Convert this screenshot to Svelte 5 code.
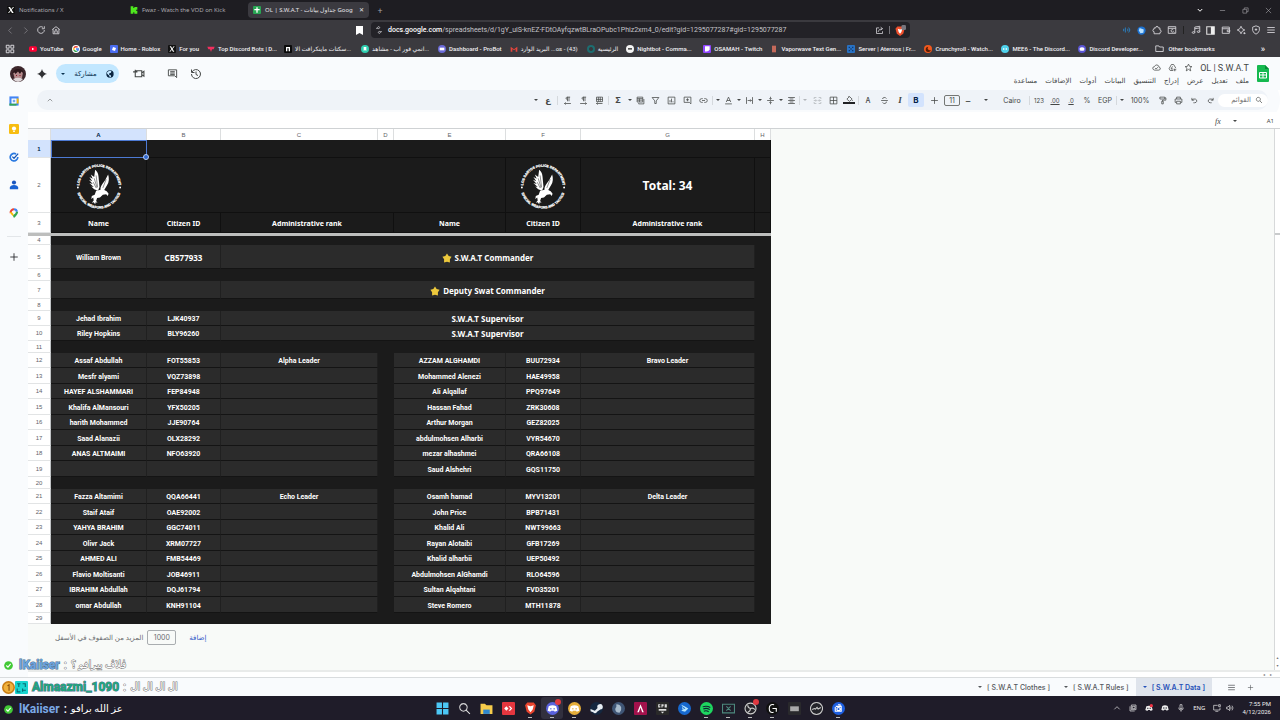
<script lang="ts">
	interface Cell {
		text?: string;
		span?: number;
		kind?: string;
	}

	interface Row {
		n: number;
		h: number;
		cells: Cell[];
	}

	const columns = [
		{ name: 'A', width: 96 },
		{ name: 'B', width: 74 },
		{ name: 'C', width: 157 },
		{ name: 'D', width: 16 },
		{ name: 'E', width: 112 },
		{ name: 'F', width: 75 },
		{ name: 'G', width: 174 },
		{ name: 'H', width: 16 },
	];

	const blank = (n: number, h: number): Row => ({ n, h, cells: [{ span: 8, kind: 'gap' }] });

	const band = (n: number, h: number, name: string, id: string, rank: string, kind = ''): Row => ({
		n,
		h,
		cells: [
			{ text: name },
			{ text: id, kind: n === 5 ? 'mid' : '' },
			{ text: rank, span: 5, kind: 'mid ' + kind },
			{ kind: 'gap' },
		],
	});

	function squad(start: number, members: string[][]): Row[] {
		return members.map((m, i) => ({
			n: start + i,
			h: i % 2 ? 16 : 15,
			cells: [
				{ text: m[0] },
				{ text: m[1] },
				{ text: m[4] },
				{ kind: 'gap' },
				{ text: m[2] },
				{ text: m[3] },
				{ text: m[5] },
				{ kind: 'gap' },
			],
		}));
	}

	const frozenRows: Row[] = [
		{ n: 1, h: 18, cells: [{ kind: 'head selected' }, { span: 7, kind: 'head' }] },
		{
			n: 2,
			h: 55,
			cells: [
				{ kind: 'head logo' },
				{ span: 4, kind: 'head' },
				{ kind: 'head logo' },
				{ text: 'Total: 34', kind: 'head total' },
				{ kind: 'head' },
			],
		},
		{
			n: 3,
			h: 20,
			cells: [
				{ text: 'Name', kind: 'head title' },
				{ text: 'Citizen ID', kind: 'head title' },
				{ text: 'Administrative rank', span: 2, kind: 'head title' },
				{ text: 'Name', kind: 'head title' },
				{ text: 'Citizen ID', kind: 'head title' },
				{ text: 'Administrative rank', kind: 'head title' },
				{ kind: 'head' },
			],
		},
	];

	const rows: Row[] = [
		blank(4, 9),
		band(5, 24, 'William Brown', 'CB577933', 'S.W.A.T Commander', 'star'),
		blank(6, 12),
		band(7, 18, '', '', 'Deputy Swat Commander', 'star'),
		blank(8, 12),
		band(9, 15, 'Jehad Ibrahim', 'LJK40937', 'S.W.A.T Supervisor'),
		band(10, 15, 'Riley Hopkins', 'BLY96260', 'S.W.A.T Supervisor'),
		blank(11, 12),
		...squad(12, [
			['Assaf Abdullah', 'FOT55853', 'AZZAM ALGHAMDI', 'BUU72934', 'Alpha Leader', 'Bravo Leader'],
			['Mesfr alyami', 'VQZ73898', 'Mohammed Alenezi', 'HAE49958'],
			['HAYEF ALSHAMMARI', 'FEP84948', 'Ali Alqallaf', 'PPQ97649'],
			['Khalifa AlMansouri', 'YFX50205', 'Hassan Fahad', 'ZRK30608'],
			['harith Mohammed', 'JJE90764', 'Arthur Morgan', 'GEZ82025'],
			['Saad Alanazii', 'OLX28292', 'abdulmohsen Alharbi', 'VYR54670'],
			['ANAS ALTMAIMI', 'NFO63920', 'mezar alhashmei', 'QRA66108'],
			['', '', 'Saud Alshehri', 'GQS11750'],
		]),
		blank(20, 12),
		...squad(21, [
			['Fazza Altamimi', 'QQA66441', 'Osamh hamad', 'MYV13201', 'Echo Leader', 'Delta Leader'],
			['Staif Ataif', 'OAE92002', 'John Price', 'BPB71431'],
			['YAHYA BRAHIM', 'GGC74011', 'Khalid Ali', 'NWT99663'],
			['Olivr Jack', 'XRM07727', 'Rayan Alotaibi', 'GFB17269'],
			['AHMED ALI', 'FMB54469', 'Khalid alharbii', 'UEP50492'],
			['Flavio Moltisanti', 'JOB46911', 'Abdulmohsen AlGhamdi', 'RLO64596'],
			['IBRAHIM Abdullah', 'DQJ61794', 'Sultan Alqahtani', 'FVD35201'],
			['omar Abdullah', 'KNH91104', 'Steve Romero', 'MTH11878'],
		]),
		blank(29, 11),
	];

	const bookmarks = [
		{ label: 'YouTube', color: '#f03', mark: 'M9 8l7 4-7 4z', flat: true },
		{ label: 'Google', google: true },
		{ label: 'Home - Roblox', color: '#4a6cf0', mark: 'M9 6l9 3-3 9-9-3z', square: true },
		{ label: 'For you', color: '#111', mark: 'M5 4h4l10 16h-4zM17 4h3L7 20H4z', square: true },
		{ label: 'Top Discord Bots | D...', color: 'none', mark: 'M1 5h22l-3 8h-5l-3 8-3-8H4z', ink: '#f0305f', wide: true },
		{ label: 'سكتات ماينكرافت الا...', color: '#0a0a0a', mark: 'M6 19V6h12v13h-4v-9h-4v9z', square: true, wide: true, arabic: true },
		{ label: 'انمي فور اب - مشاهد...', color: '#2fd0b0', mark: 'M8 6h8v12l-4-3-4 3z', wide: true, arabic: true },
		{ label: 'Dashboard - ProBot', color: '#6a6ad8', mark: 'M5 8h14v8H5z' },
		{ label: 'البريد الوارد ...os - (43)', color: 'none', mark: 'M2 20V5l10 8 10-8v15h-5v-8l-5 4-5-4v8z', ink: '#e8453c', wide: true, arabic: true },
		{ label: 'الرئيسية', color: '#1d6d70', mark: 'M12 6a6 6 0 1 0 .1 0z', ink: '#38373c', arabic: true },
		{ label: 'Nightbot - Comma...', color: '#f4f4f4', mark: 'M6 9h12v5H6z', ink: '#555', wide: true },
		{ label: 'OSAMAH - Twitch', color: '#9146ff', mark: 'M6 4h14v10l-5 5h-4l-3 3v-3H6z', square: true },
		{ label: 'Vaporwave Text Gen...', color: 'none', mark: 'M6 2h12v20H6z', ink: '#c4695a', wide: true },
		{ label: 'Server | Aternos | Fr...', color: '#2872c4', mark: 'M5 5h4v4H5zM15 5h4v4h-4zM10 10h4v4h-4zM5 15h4v4H5zM15 15h4v4h-4z', ink: '#123a70', square: true, wide: true },
		{ label: 'Crunchyroll - Watch...', color: '#f2591d', mark: 'M13 5a8 8 0 1 0 8 9 5 5 0 1 1-8-9z', ink: '#5b1c05', wide: true },
		{ label: 'MEE6 - The Discord...', color: '#4fd2ec', mark: 'M6 10h4v4H6zM14 10h4v4h-4z', wide: true },
		{ label: 'Discord Developer...', color: '#5b55d6', mark: 'M5 9q7-4 14 0v7q-7 3-14 0z', wide: true },
	];

	// strokes on a 24 unit grid
	const icons: Record<string, string> = {
		back: 'M15 4l-8 8 8 8',
		forward: 'M9 4l8 8-8 8',
		reload: 'M20 12a8 8 0 1 1-3-6.200M20 3v6h-6',
		home: 'M3 11l9-7 9 7M5 10v11h14V10M9 20v-6h6v6M10 11h4',
		tune: 'M3 7h6M13 7a3 3 0 1 0-4 0 3 3 0 0 0 4 0M21 17h-6M11 17a3 3 0 1 0 4 0 3 3 0 0 0-4 0',
		share: 'M11 5H4v15h16v-6M8 16q1-8 12-9M15 3l5 4-5 4',
		wave: 'M4 9v6M8 6v12M13 9q3 3 0 6M16 6q6 6 0 12',
		puzzle: 'M5 7h4q0-4 3-4t3 4h4v5q3 0 3 3t-3 3v3H5v-5q-3 0-3-3t3-3z',
		tabsearch: 'M3 4h18v16H3zM3 8h18M15 12a3 3 0 1 0 0 4M15 16l3 2',
		music: 'M9 18V5l12-2v13M9 9l12-2M9 18a3 2 0 1 1-6 0 3 2 0 0 1 6 0M21 16a3 2 0 1 1-6 0 3 2 0 0 1 6 0',
		wallet: 'M3 5h17v15H3zM3 9h18M21 12h-6v4h6z',
		leo: 'M12 3l3 6 6 3-6 3-3 6-3-6-6-3 6-3zM20 17v5M18 20h5',
		shield: 'M12 2l8 3v8q-1 6-8 9-7-3-8-9V5zM12 8v6M9 11h6',
		menu: 'M3 6h18M3 12h18M3 18h18',
		apps: 'M3 3h7v7H3zM14 3h7v7h-7zM3 14h7v7H3zM14 14h7v7h-7z',
		folder: 'M2 5h8l2 3h10v12H2z',
		video: 'M7 7h11v11H6v-6M18 11l4-3v9l-4-3M2 9h8M6 5v8',
		comment: 'M3 4h18v17l-4-4H3zM7 8h10M7 11h10M7 14h10',
		history: 'M4 8a9 9 0 1 1-1 4M3 3v6h6M12 7v6l4 2',
		cloud: 'M7 19q-5-1-5-5 0-4 5-5 2-4 6-4 5 1 6 6 4 1 3 5-1 3-4 3zM8 13l3 3 5-5',
		drive: 'M9 4h6l6 10M9 4L3 15l3 5h8M12 9l-4 7h6M18 15v7M15 18h7',
		star: 'M12 3l3 6 6 .6-5 4.400 2 7-6-4-6 4 2-7-5-4.400L9 9z',
		search: 'M10 4a6 6 0 1 0 .1 0M14.500 14.500L21 21',
		redo: 'M19 5v6h-6M19 11q-4-4-9-3-5 2-4 6 1 4 6 4h3',
		undo: 'M5 5v6h6M5 11q4-4 9-3 5 2 4 6-1 4-6 4H9',
		print: 'M7 8V3h10v5M6 17H3V8h18v9h-3M7 14h10v7H7z',
		paint: 'M5 3h13v5H5zM18 5h3v6h-9v3M10 14h4v7h-4z',
		fill: 'M5 11l7-7 7 7-7 6zM9 3l3 3M20 14v2',
		borders: 'M3 3h18v18H3zM3 12h18M12 3v18',
		merge: 'M3 8V4h6M15 4h6v4M3 16v4h6M15 20h6v-4M2 12h7M7 9l3 3-3 3M22 12h-7M17 9l-3 3 3 3',
		align: 'M3 4h18M7 8h10M3 12h18M7 16h10M3 20h18',
		valign: 'M3 12h18M12 2v7M9 6l3 3 3-3M12 22v-7M9 18l3-3 3 3',
		wrap: 'M4 3v18M20 3v18M7 12h10M14 9l3 3-3 3',
		link: 'M10 7H7a5 5 0 0 0 0 10h3M14 7h3a5 5 0 0 1 0 10h-3M8 12h8',
		addcomment: 'M3 3h18v18l-4-4H3zM12 6v8M8 10h8',
		chart: 'M3 3h18v18H3zM8 17v-6M12 17V7M16 17v-3',
		filter: 'M3 4h18l-7 9v7h-4v-7z',
		views: 'M3 3h15v13H3zM3 7h15M7 19v2h14V8M3 11h15M9 7v9',
		rtlsheet: 'M4 3h16v12H4zM9 3v12M14 3v12M4 9h16M4 20h16M7 17l-3 3 3 3',
		ltr: 'M11 3h8M12 3v11M16 3v11M12 9q-5 0-4-4 1-2 4-2M3 20h17M17 17l3 3-3 3',
		rtl: 'M11 3h8M12 3v11M16 3v11M12 9q-5 0-4-4 1-2 4-2M4 20h17M7 17l-3 3 3 3',
		textcolor: 'M6 16l6-13 6 13M8 12h8M3 21h18',
		strike: 'M3 12h18M17 7q-2-4-6-3-5 1-4 4M7 17q2 4 6 3 5-1 4-5',
		plus: 'M12 3v18M3 12h18',
	};

	const tools = [
		{ caret: true },
		{ text: 'ع', cls: 'bold' },
		{ sep: true },
		{ icon: 'rtl', label: 'Right to left' },
		{ icon: 'ltr', label: 'Left to right' },
		{ icon: 'rtlsheet', label: 'Sheet direction' },
		{ sep: true },
		{ text: 'Σ', cls: 'bold' },
		{ caret: true },
		{ icon: 'views', label: 'Filter views', cls: 'slim' },
		{ icon: 'filter', label: 'Filter' },
		{ icon: 'chart', label: 'Insert chart' },
		{ icon: 'addcomment', label: 'Insert comment' },
		{ icon: 'link', label: 'Insert link' },
		{ sep: true },
		{ caret: true },
		{ icon: 'textcolor', label: 'Text rotation', cls: 'slim' },
		{ caret: true },
		{ icon: 'wrap', label: 'Text wrapping', cls: 'slim' },
		{ caret: true },
		{ icon: 'valign', label: 'Vertical align', cls: 'slim' },
		{ caret: true },
		{ icon: 'align', label: 'Horizontal align', cls: 'slim' },
		{ sep: true },
		{ caret: true, cls: 'dim' },
		{ icon: 'merge', label: 'Merge cells', cls: 'dim' },
		{ icon: 'borders', label: 'Borders' },
		{ icon: 'fill', label: 'Fill colour', cls: 'filled' },
		{ sep: true },
		{ text: 'A', cls: 'letter' },
		{ icon: 'strike', label: 'Strikethrough' },
		{ text: 'I', cls: 'italic' },
		{ text: 'B', cls: 'active bold' },
		{ icon: 'plus', label: 'Increase font size', cls: 'broad' },
		{ size: true },
		{ text: '−', cls: 'big' },
		{ caret: true, cls: 'broad' },
		{ text: 'Cairo', cls: 'font' },
		{ sep: true },
		{ text: '123', cls: 'small' },
		{ text: '.00', cls: 'under' },
		{ text: '.0', cls: 'under' },
		{ text: '%' },
		{ text: 'EGP', cls: 'broad' },
		{ sep: true },
		{ caret: true },
		{ text: '100%', cls: 'zoom' },
		{ icon: 'paint', label: 'Paint format' },
		{ icon: 'print', label: 'Print' },
		{ icon: 'undo', label: 'Undo' },
		{ icon: 'redo', label: 'Redo' },
	];

	const menus = ['ملف', 'تعديل', 'عرض', 'إدراج', 'التنسيق', 'البيانات', 'أدوات', 'الإضافات', 'مساعدة'];

	const taskbar = [
		{ name: 'Start', bg: 'none', d: 'M1 1h10v10H1zM13 1h10v10H13zM1 13h10v10H1zM13 13h10v10H13z', ink: '#4cc7f5' },
		{ name: 'Search', bg: 'none', line: 'M10 3a7 7 0 1 0 .1 0M15 15l7 7', ink: '#ddd' },
		{ name: 'Explorer', bg: 'none', d: 'M1 3h8l3 3h11v16H1z', ink: '#f7cc4b', d2: 'M6 14h12v8H6z', ink2: '#2f87cf' },
		{ name: 'AnyDesk', bg: '#e5363f', d: 'M4 12l4-4 4 4-4 4zM12 8h3l4 4-4 4h-3l4-4z', ink: '#fff' },
		{ name: 'Brave', bg: 'none', d: 'M6 1h12l4 5-3 12-7 5-7-5L2 6z', ink: '#e8442e', d2: 'M6 6l6 2 6-2-2 8-4 5-4-5z', ink2: '#fff', open: true },
		{ name: 'Discord', bg: '#5a62de', round: true, d: 'M5 8q7-4 14 0l2 8-5 2-1-2H9l-1 2-5-2zM8 11v3h2v-3zM14 11v3h2v-3z', ink: '#fff', badge: true, active: true, open: true },
		{ name: 'Discord Canary', bg: '#e5ae3a', round: true, d: 'M5 8q7-4 14 0l2 8-5 2-1-2H9l-1 2-5-2zM8 11v3h2v-3zM14 11v3h2v-3z', ink: '#fff', open: true },
		{ name: 'Steam', bg: '#14273f', round: true, d: 'M1 13l8 3 5-5a5 5 0 1 1 5 3l-6 4a4 4 0 0 1-7 1l-5-2z', ink: '#e7edf2' },
		{ name: 'Eclipse', bg: '#3f5575', round: true, d: 'M8 4q7 0 9 6 1 6-3 10-7 0-8-6 0-4 2-5z', ink: '#a9bbcc' },
		{ name: 'A', bg: '#a3124c', d: 'M6 19l6-15 6 15h-3l-3-9-3 9z', ink: '#fff' },
		{ name: 'Epic Games', bg: '#292929', d: 'M4 4h4v2H6v2h2v2H4zM10 4h4v4h-2v2h-2zM16 4h4v6h-4zM5 13h14v3H5zM9 18h6l-3 3z', ink: '#ddd' },
		{ name: 'Battle.net', bg: '#1769cf', round: true, d: 'M6 5l6 3 7 4-6 6-7-2 5-3zM8 8v6l6-2z', ink: '#b5e6ff' },
		{ name: 'Spotify', bg: '#1ed760', round: true, line: 'M5 9q7-3 14 1M6 13q6-3 12 1M7 17q5-2 9 1', ink: '#123', open: true },
		{ name: 'Xbox Remote', bg: 'none', line: 'M1 4h22v16H1zM8 8l8 8M16 8l-8 8', ink: '#4d887d', open: true },
		{ name: 'OBS', bg: '#25242a', round: true, line: 'M12 2a10 10 0 1 0 .1 0M12 12q-5-1-5-6M12 12q5-2 8 2M12 12q0 5-5 7', ink: '#ccc', badge: true, open: true },
		{ name: 'G Hub', bg: '#111', round: true, line: 'M15 5q-9-2-9 7t8 7M12 12h7v6', ink: '#fff', open: true },
		{ name: 'Keyboard', bg: '#29292c', d: 'M4 8h16v9H4z', ink: '#aaa' },
		{ name: 'JMP', bg: '#24242a', round: true, line: 'M12 1a11 11 0 1 0 .1 0M4 14l4-2 2 1 3-3 2 3 5-3', ink: '#ccc' },
		{ name: 'Camera', bg: '#1d5fe0', round: true, line: 'M7 8h10v9H6V9M11 5h4v3M12 10a3 3 0 1 0 .1 0', ink: '#fff', open: true },
	];

	const chat = [
		{ name: 'lKaiiser', text: 'ڤلاڤ بيرافو ؟', color: '#6ba3e0', badges: ['check'], pale: true },
		{ name: 'Almaazmi_1090', text: 'ال ال ال ال', color: '#1fa77c', badges: ['coin', 'tiles'], pale: true },
		{ name: 'lKaiiser', text: 'عز الله برافو', color: '#7ba9e6', badges: ['check'], pale: false },
	];

	const browserTools = ['wave', 'dot', 'puzzle', 'tabsearch', '|', 'music', 'panel', 'wallet', 'leo', 'shield', 'menu'];
	const sheetTabs = ['[ S.W.A.T Clothes ]', '[ S.W.A.T Rules ]', '[ S.W.A.T Data ]'];

	let rowCount = 1000;
	let fontSize = 11;
</script>

{#snippet icon(name, size = 10)}
	<svg class="icon" width={size} height={size} viewBox="0 0 24 24" aria-hidden="true"><path d={icons[name]} /></svg>
{/snippet}

{#snippet seal(id)}
	<svg class="seal" viewBox="0 0 100 100" aria-label="Los Santos Police Department">
		<defs>
			<path id="{id}-top" d="M9 51a41 41 0 0 1 82 0" />
			<path id="{id}-bottom" d="M3 50a47 47 0 0 0 94 0" />
		</defs>
		<text><textPath href="#{id}-top" startOffset="50%">LOS SANTOS POLICE DEPARTMENT</textPath></text>
		<text><textPath href="#{id}-bottom" startOffset="50%">SPECIAL WEAPONS AND TACTICS</textPath></text>
		<circle cx="6" cy="53" r="2" />
		<circle cx="94" cy="53" r="2" />
		<path d="M42 16q6 4 7 14l2 22-3 8-8-3-6-6 5 1-9-8 7 2-8-9 7 3-6-9 7 4-4-9 7 5z" />
		<path d="M69 26q4 12-2 22l-7 12-6 2q-3-8 3-16 7-9 12-20z" />
		<path d="M44 60l10-2q8 0 12 3l4 5-2 5-3-4-7 1-6 6-6 1-2 6 3 4-4-1-1 4-3-4-4 1 4-5-1-6-4 3 1-6 6-3z" />
		<path d="M44 28l3 24M40 34l6 20M38 42l6 12M65 36l-7 18" stroke="#1b1b1b" stroke-width="1" />
	</svg>
{/snippet}

{#snippet sheetRow(row)}
	<tr style="height: {row.h}px">
		<th class="rownum" class:current={row.n === 1} scope="row"><span>{row.n}</span></th>
		{#each row.cells as cell, i}
			<td colspan={cell.span ?? 1} class={cell.kind ?? ''}>
				{#if cell.kind?.includes('logo')}
					{@render seal('seal' + i)}
				{:else if cell.kind?.includes('selected')}
					<span class="handle"></span>
				{:else if cell.text}
					<div class="value">
						{#if cell.kind?.includes('star')}
							<svg class="gold" viewBox="0 0 24 24"><path d="M12 1l4 6 7 2-4 6 0 8-7-2-7 2 0-8-4-6 7-2z" /></svg>
						{/if}{cell.text}
					</div>
				{/if}
			</td>
		{/each}
	</tr>
{/snippet}

<div class="screen">
	<nav class="tabs" aria-label="Browser tabs">
		<a class="tab" href="#x"><svg class="fav" viewBox="0 0 24 24"><rect width="24" height="24" rx="3" fill="#111" /><path d="M4 3h5l11 18h-5zM18 3h3L6 21H3z" fill="#fff" /></svg>Notifications / X</a>
		<a class="tab" href="#kick"><svg class="fav" viewBox="0 0 24 24"><path d="M2 1h8v5h3V3h9v8h-4v3h4v9h-9v-4h-3v4H2z" fill="#4fe81e" /></svg>Fwaz - Watch the VOD on Kick</a>
		<a class="tab open" href="#sheet"><svg class="fav" viewBox="0 0 24 24"><rect width="24" height="24" rx="3" fill="#28a653" /><path d="M4 9h16v4H4zM10 4h4v16h-4z" fill="#fff" /></svg><span class="tab-title">OL | S.W.A.T - جداول بيانات Goog</span><span class="x">✕</span></a>
		<button class="new-tab" aria-label="New tab">+</button>
		<div class="window-buttons">
			<button aria-label="Tabs"><svg class="icon bright" width="6" height="6" viewBox="0 0 24 24"><path d="M3 8l9 9 9-9" /></svg></button>
			<button aria-label="Minimise"><svg class="icon" width="7" height="7" viewBox="0 0 24 24"><path d="M3 12h18" /></svg></button>
			<button aria-label="Restore"><svg class="icon" width="7" height="7" viewBox="0 0 24 24"><path d="M3 8h13v13H3zM8 8V3h13v13h-5" /></svg></button>
			<button aria-label="Close"><svg class="icon" width="7" height="7" viewBox="0 0 24 24"><path d="M3 3l18 18M21 3L3 21" /></svg></button>
		</div>
	</nav>

	<div class="address">
		<div class="nav-buttons">
			<button class="faded" aria-label="Back">{@render icon('back', 9)}</button>
			<button class="faded" aria-label="Forward">{@render icon('forward', 9)}</button>
			<button aria-label="Reload">{@render icon('reload', 10)}</button>
			<button aria-label="Home">{@render icon('home', 10)}</button>
		</div>
		<button class="bookmark" aria-label="Bookmark"><svg width="7" height="9" viewBox="0 0 14 18"><path d="M0 0h14v18l-7-4-7 4z" fill="#fff" /></svg></button>
		<div class="url">
			{@render icon('tune', 8)}
			<span class="link"><b>docs.google.com</b>/spreadsheets/d/1gY_uiS-knEZ-FDtOAyfqzwtBLraOPubc1Phiz2xm4_0/edit?gid=1295077287#gid=1295077287</span>
			{@render icon('share', 9)}
			<i></i>
			<svg width="11" height="11" viewBox="0 0 24 24"><path d="M5 3h12l4 5-3 11-7 5-7-5L1 8z" fill="#ed4f2c" /><path d="M6 8l5 2 5-2-2 7-3 4-3-4z" fill="#fff" /><rect x="14" y="0" width="10" height="11" rx="3" fill="#77767e" /></svg>
		</div>
		<div class="extensions">
			{#each browserTools as tool}
				{#if tool === '|'}
					<i class="bar"></i>
				{:else if tool === 'dot'}
					<button aria-label="Extension"><svg width="9" height="9" viewBox="0 0 24 24"><circle cx="12" cy="12" r="11" fill="#1d73d3" /><path d="M7 5l11 4-1 9-8 1-4-7z" fill="#b9e1ff" /></svg></button>
				{:else if tool === 'panel'}
					<button aria-label="Side panel"><svg width="9" height="9" viewBox="0 0 24 24"><path d="M2 2h20v20H2z" fill="none" stroke="#ddd" stroke-width="3" /><path d="M13 2h9v20h-9z" fill="#eee" /></svg></button>
				{:else}
					<button class:blue={tool === 'wave'} aria-label={tool}>{@render icon(tool, 10)}</button>
				{/if}
			{/each}
		</div>
	</div>

	<nav class="bookmarks" aria-label="Bookmarks">
		<button class="apps" aria-label="Apps">{@render icon('apps', 10)}</button>
		{#each bookmarks as b}
			<a href="#bookmark" class:wide={b.wide} class:arabic={b.arabic}>
				<svg class="fav" viewBox="0 0 24 24">
					{#if b.google}
						<circle cx="12" cy="12" r="12" fill="#fff" />
						<g fill="none" stroke-width="4"><path d="M17 7a7 7 0 0 0-11 2" stroke="#ea4335" /><path d="M6 9a7 7 0 0 0 0 6" stroke="#fbbc04" /><path d="M6 15a7 7 0 0 0 10 3" stroke="#34a853" /><path d="M12 12h7q0 4-3 6" stroke="#4285f4" /></g>
					{:else}
						<rect y={b.flat ? 4 : 0} width="24" height={b.flat ? 16 : 24} rx={b.flat ? 5 : b.square ? 3 : 12} fill={b.color} />
						<path d={b.mark} fill={b.ink ?? '#fff'} />
					{/if}
				</svg>{b.label}
			</a>
		{/each}
		<a class="other" href="#other">{@render icon('folder', 9)}Other bookmarks</a>
		<button class="more" aria-label="More bookmarks">»</button>
	</nav>

	<header class="doc">
		<svg class="avatar" viewBox="0 0 32 32"><circle cx="16" cy="16" r="16" fill="#3d272c" /><path d="M6 12q9-8 20 0l-2 12q-8 6-15 0z" fill="#b58b8d" /><path d="M4 15q4-10 13-9 9 0 11 10l-5-5-3 5-4-5-5 5-2-3z" fill="#2b171b" /><path d="M12 18h2v2h-2zM19 18h2v2h-2z" fill="#8b1522" /><path d="M6 26q10-5 20 0-4 6-10 6t-10-6z" fill="#ded6d8" /></svg>
		<svg class="spark" viewBox="0 0 24 24"><path d="M12 0q2 10 12 12-10 2-12 12Q10 14 0 12 10 10 12 0z" /></svg>
		<button class="share"><i class="caret"></i><span>مشاركة</span><svg width="8" height="8" viewBox="0 0 24 24"><circle cx="12" cy="12" r="11" fill="#0a2540" /><path d="M10 2l6 1-1 5-5 2-1 4 5 1 1 6-4 1-1-5-5-4-3-4q2-5 8-7z" fill="#c2e7ff" /></svg></button>
		<button class="act video" aria-label="Meet">{@render icon('video', 13)}</button>
		<button class="act" aria-label="Comments">{@render icon('comment', 11)}</button>
		<button class="act" aria-label="History">{@render icon('history', 12)}</button>
		<div class="doc-name" dir="rtl">
			<div class="title-line">
				<h1 dir="ltr">OL | S.W.A.T</h1>
				{@render icon('star', 9)}
				{@render icon('drive', 9)}
				{@render icon('cloud', 9)}
			</div>
			<div class="menus">
				{#each menus as menu}<button>{menu}</button>{/each}
			</div>
		</div>
		<svg class="sheets-logo" viewBox="0 0 24 34"><path d="M2 0h14l8 8v24q0 2-2 2H2q-2 0-2-2V2q0-2 2-2z" fill="#16b94f" /><path d="M16 0l8 8h-8z" fill="#078b36" /><path d="M5 15h14v11H5zM5 20h14M12 15v11" fill="none" stroke="#fff" stroke-width="2" /></svg>
	</header>

	<div class="workspace">
		<aside class="rail">
			<svg viewBox="0 0 24 24"><path d="M1 1h22v22H1z" fill="#4285f4" /><path d="M1 18h17v5H1z" fill="#34a853" /><path d="M18 6h5v12h-5z" fill="#fbbc04" /><path d="M6 6h12v12H6z" fill="#fff" /><path d="M9 9h6v6H9z" fill="#77a7ed" /></svg>
			<svg viewBox="0 0 24 24"><rect width="24" height="24" rx="3" fill="#f7bd12" /><circle cx="12" cy="11" r="5" fill="#fff" /><path d="M10 17h4v2h-4z" fill="#fff" /></svg>
			<svg viewBox="0 0 24 24"><path d="M21 12a9 9 0 1 1-4-7" fill="none" stroke="#2878e0" stroke-width="4" /><path d="M8 11l4 4L22 4" fill="none" stroke="#1557b8" stroke-width="3" /></svg>
			<svg viewBox="0 0 24 24"><circle cx="12" cy="6" r="5" fill="#1a56bf" /><path d="M2 22v-4q1-6 10-6t10 6v4z" fill="#1a62d2" /></svg>
			<svg viewBox="0 0 24 24"><path d="M4 12a8 8 0 0 1 8-9" fill="none" stroke="#ea4335" stroke-width="5" /><path d="M12 3a7 7 0 0 1 7 6" fill="none" stroke="#4285f4" stroke-width="5" /><path d="M22 9q0 6-10 15l-3-6q8-5 8-9z" fill="#34a853" /><path d="M2 9q1 6 8 11l1-5-4-5z" fill="#fbbc04" /></svg>
			<hr />
			<button aria-label="Add-ons">{@render icon('plus', 9)}</button>
		</aside>

		<main>
			<div class="toolbar">
				<button class="collapse" aria-label="Hide menus"><svg class="icon" width="6" height="6" viewBox="0 0 24 24"><path d="M3 17l9-9 9 9" /></svg></button>
				{#each tools as tool}
					{#if tool.sep}
						<i class="sep"></i>
					{:else if tool.caret}
						<button class="tool drop {tool.cls ?? ''}" aria-label="More"><i class="caret"></i></button>
					{:else if tool.size}
						<input class="size" aria-label="Font size" bind:value={fontSize} />
					{:else if tool.icon}
						<button class="tool {tool.cls ?? ''}" aria-label={tool.label}>{@render icon(tool.icon, 9)}</button>
					{:else}
						<button class="tool {tool.cls ?? ''}">{tool.text}</button>
					{/if}
				{/each}
				<label class="search" dir="rtl">{@render icon('search', 8)}<input aria-label="القوائم" placeholder="القوائم" /></label>
			</div>

			<div class="formula"><em>fx</em><i class="caret"></i><span>A1</span></div>

			<div class="sheet">
				<div class="grid">
					<table>
						<colgroup>
							<col style="width: 23px" />
							{#each columns as col}<col style="width: {col.width}px" />{/each}
						</colgroup>
						<thead>
							<tr>
								<th class="corner"></th>
								{#each columns as col}<th class:current={col.name === 'A'} scope="col">{col.name}</th>{/each}
							</tr>
						</thead>
						<tbody>
							{#each frozenRows as row}{@render sheetRow(row)}{/each}
							<tr class="freeze"><td colspan="9"></td></tr>
							{#each rows as row}{@render sheetRow(row)}{/each}
						</tbody>
					</table>
					<div class="add-rows">
						<label for="row-count" dir="rtl">المزيد من الصفوف في الأسفل</label>
						<input id="row-count" bind:value={rowCount} />
						<button>إضافة</button>
					</div>
				</div>
				<div class="vscroll"><span></span><i>▴</i><i>▾</i></div>
			</div>
			<div class="hscroll"><i>◂</i><i>▸</i></div>
		</main>
	</div>

	<footer class="sheet-tabs">
		{#each sheetTabs as tab, i}
			<button class:selected={i === 2}><i class="caret"></i>{tab}</button>
		{/each}
		<button class="all" aria-label="All sheets">{@render icon('menu', 9)}</button>
		<button class="add" aria-label="Add sheet">{@render icon('plus', 7)}</button>
	</footer>

	<div class="taskbar">
		<div class="programs">
			{#each taskbar as app}
				<button class:active={app.active} aria-label={app.name}>
					<svg viewBox="0 0 24 24" width="13" height="13">
						<rect width="24" height="24" rx={app.round ? 12 : 2} fill={app.bg} />
						{#if app.d}<path d={app.d} fill={app.ink} fill-rule="evenodd" />{/if}
						{#if app.d2}<path d={app.d2} fill={app.ink2} />{/if}
						{#if app.line}<path d={app.line} fill="none" stroke={app.ink} stroke-width="2" />{/if}
					</svg>
					{#if app.badge}<span class="badge"></span>{/if}
					{#if app.open}<span class="running"></span>{/if}
				</button>
			{/each}
		</div>
		<div class="tray">
			<svg class="icon" viewBox="0 0 24 24"><path d="M4 16l8-8 8 8" /></svg>
			<svg class="icon" viewBox="0 0 24 24"><path d="M7 3h14v14H7zM3 7v14h14M10 7h8v7h-8z" /></svg>
			<svg viewBox="0 0 24 24"><path d="M4 7q8-4 16 0l3 11-6 3-2-3H9l-2 3-6-3zM7 11v4h3v-4zM14 11v4h3v-4z" fill="#eee" fill-rule="evenodd" /><circle cx="19" cy="5" r="5" fill="#e34" /></svg>
			<svg viewBox="0 0 24 24"><path d="M4 6q8-4 16 0l3 11-6 3-2-3H9l-2 3-6-3zM7 10v4h3v-4zM14 10v4h3v-4z" fill="#eee" fill-rule="evenodd" /></svg>
			<svg class="icon" viewBox="0 0 24 24"><path d="M9 2h6v12H9zM5 11q0 7 7 7t7-7M12 18v5" /></svg>
			<span class="lang">ENG</span>
			<svg class="icon near" viewBox="0 0 24 24"><path d="M14 4H2v14h19v-7M7 22h9M17 2h5v6h-5z" /></svg>
			<svg class="icon" viewBox="0 0 24 24"><path d="M2 9h4l5-5v16l-5-5H2zM14 8q3 4 0 8M18 5q6 7 0 14" /></svg>
			<div class="clock"><span>7:55 PM</span><span>4/12/2026</span></div>
		</div>
	</div>

	<div class="chat">
		{#each chat as line}
			<p class:pale={line.pale}>
				{#each line.badges as badge}
					<svg class="chat-badge" viewBox="0 0 24 24">
						{#if badge === 'check'}
							<circle cx="12" cy="12" r="8" fill="#42c936" /><path d="M8 12l3 3 5-6" fill="none" stroke="#fff" stroke-width="2" />
						{:else if badge === 'coin'}
							<circle cx="12" cy="12" r="12" fill="#c97d16" /><circle cx="12" cy="12" r="9" fill="#f0b13c" /><path d="M10 9l3-2v11" fill="none" stroke="#8a500b" stroke-width="2" />
						{:else}
							<rect width="24" height="24" rx="2" fill="#18d5d0" /><path d="M4 5h6M7 5v6M14 5h5v6M4 14v6h6M14 14v6M14 17h6" fill="none" stroke="#056b73" stroke-width="2" />
						{/if}
					</svg>
				{/each}
				<b style="color: {line.color}">{line.name}</b><span class="colon">:</span><bdi>{line.text}</bdi>
			</p>
		{/each}
	</div>
</div>

<style>
	:global(body) {
		background: #f9fbfd;
	}

	.screen {
		position: relative;
		display: flex;
		flex-direction: column;
		min-height: 100vh;
		overflow: hidden;
		font-family: "Noto Sans", "DejaVu Sans", sans-serif;
		font-size: 7px;
		color: #444746;
	}

	button,
	input {
		margin: 0;
		padding: 0;
		border: 0;
		background: none;
		font: inherit;
		color: inherit;
	}

	button {
		display: flex;
		align-items: center;
		justify-content: center;
		white-space: nowrap;
		cursor: pointer;
	}

	a {
		color: inherit;
		text-decoration: none;
	}

	svg {
		flex: none;
	}

	.icon {
		fill: none;
		stroke: currentColor;
		stroke-width: 2;
	}

	.caret {
		flex: none;
		border: 2px solid transparent;
		border-top-color: currentColor;
		border-bottom: 0;
	}

	.fav {
		width: 8px;
		height: 8px;
	}

	/* browser chrome */
	.tabs {
		display: flex;
		align-items: center;
		height: 20px;
		background: #1e1d22;
		color: #aaa9ae;
		font-size: 6px;
	}

	.tab {
		display: flex;
		align-items: center;
		gap: 4px;
		box-sizing: border-box;
		width: 123px;
		height: 16px;
		padding: 0 7px;
		white-space: nowrap;
	}

	.tab.open {
		width: 121px;
		margin-left: 2px;
		padding: 0 5px;
		border-radius: 4px;
		background: #3b3a40;
		color: #e4e3e8;
	}

	.tab-title {
		flex: 1;
	}

	.new-tab {
		width: 22px;
		font-size: 9px;
	}

	.window-buttons {
		display: flex;
		margin-left: auto;
	}

	.window-buttons button {
		width: 23px;
	}

	.bright {
		color: #fff;
		stroke-width: 4;
	}

	.address {
		display: flex;
		align-items: center;
		height: 20px;
		background: #3b3a3f;
		color: #dddce1;
	}

	.nav-buttons {
		display: flex;
		margin-right: 80px;
		padding-left: 3px;
	}

	.nav-buttons button {
		width: 15px;
	}

	.faded {
		color: #85848a;
	}

	.bookmark {
		width: 14px;
		margin-left: auto;
	}

	.url {
		display: flex;
		align-items: center;
		gap: 5px;
		flex: 0 1 531px;
		height: 16px;
		margin-left: 5px;
		padding: 0 4px;
		border-radius: 4px;
		background: #232227;
		font-family: Roboto, sans-serif;
	}

	.link {
		flex: 1;
		white-space: nowrap;
		color: #c5c4c9;
	}

	.link b {
		font-weight: 500;
		color: #fff;
	}

	.url i {
		width: 1px;
		height: 8px;
		background: #77767c;
	}

	.extensions {
		display: flex;
		align-items: center;
		margin-left: auto;
		padding-right: 2px;
	}

	.extensions button {
		width: 15px;
	}

	.blue {
		color: #278bd6;
	}

	.bar {
		width: 1px;
		height: 8px;
		margin: 0 4px;
		background: #222;
	}

	.bookmarks {
		display: flex;
		align-items: center;
		gap: 8px;
		height: 17px;
		padding: 0 15px 0 5px;
		background: #3b3a3f;
		color: #f2f1f5;
		font: 500 6px Roboto, "DejaVu Sans", sans-serif;
		white-space: nowrap;
	}

	.bookmarks a {
		display: flex;
		align-items: center;
		gap: 3px;
	}

	.bookmarks .wide {
		width: 69px;
	}

	.bookmarks .arabic {
		font-weight: 400;
	}

	.apps {
		padding-right: 6px;
	}

	.bookmarks .other {
		gap: 4px;
	}

	.more {
		margin-left: auto;
		font-size: 9px;
	}

	/* document header */
	.doc {
		display: flex;
		align-items: center;
		height: 33px;
		padding: 0 11px 0 10px;
		background: #f9fbfd;
	}

	.avatar {
		width: 16px;
		height: 16px;
	}

	.spark {
		width: 10px;
		height: 10px;
		margin: 0 9px 0 11px;
		fill: #303134;
	}

	.share {
		gap: 9px;
		width: 63px;
		height: 19px;
		border-radius: 10px;
		background: #c2e7ff;
		color: #0a3350;
	}

	.act {
		width: 24px;
	}

	.act.video {
		margin: 0 10px 0 7px;
	}

	.doc-name {
		display: flex;
		flex-direction: column;
		gap: 1px;
		margin-left: auto;
		margin-right: 8px;
	}

	.title-line {
		display: flex;
		align-items: center;
		gap: 7px;
		height: 12px;
	}

	h1 {
		margin: 0;
		font: 400 9px/12px Roboto, sans-serif;
	}

	.menus {
		display: flex;
		gap: 8px;
		height: 11px;
	}

	.sheets-logo {
		width: 12px;
		height: 17px;
	}

	.workspace {
		display: flex;
		flex: 1;
	}

	.rail {
		display: flex;
		flex-direction: column;
		align-items: center;
		gap: 18px;
		width: 28px;
		padding-top: 6px;
		background: #f9fbfd;
	}

	.rail svg {
		width: 10px;
		height: 10px;
	}

	.rail hr {
		width: 14px;
		margin: 0 0 -3px;
		border: 0;
		border-top: 1px solid #e3e6e9;
	}

	.rail button {
		height: 10px;
		color: #202124;
	}

	main {
		display: flex;
		flex: 1;
		flex-direction: column;
		min-width: 0;
		background: #fff;
	}

	.toolbar {
		display: flex;
		align-items: center;
		height: 20px;
		margin: 0 12px 0 9px;
		border-radius: 10px;
		background: #eff3f8;
		font-family: Inter, "DejaVu Sans", sans-serif;
		box-shadow: 0 0 0 12px #f9fbfd;
		clip-path: inset(0 -12px -2px -12px);
	}

	.collapse {
		width: 26px;
		margin-right: auto;
	}

	.tool {
		flex: none;
		width: 16px;
		height: 14px;
	}

	.tool.drop {
		width: 8px;
	}

	.tool.slim {
		width: 13px;
	}

	.tool.broad {
		width: 20px;
	}

	.tool.font {
		width: 32px;
	}

	.tool.zoom {
		width: 28px;
	}

	.tool.bold {
		font-weight: 700;
		font-size: 8px;
	}

	.tool.letter {
		font-weight: 500;
	}

	.tool.italic {
		font: italic 700 9px "Liberation Serif", serif;
	}

	.tool.active {
		border-radius: 2px;
		background: #d3e3fd;
		color: #041e49;
	}

	.tool.big {
		font-size: 10px;
	}

	.tool.small {
		font-size: 6px;
	}

	.tool.under {
		font-size: 6px;
		text-decoration: underline;
	}

	.tool.dim {
		color: #b1b5b9;
	}

	.tool.filled {
		box-sizing: border-box;
		height: 12px;
		border: solid transparent;
		border-width: 0 2px 2px;
		box-shadow: 0 -2px #202124 inset;
	}

	.sep {
		width: 1px;
		height: 9px;
		margin: 0 1px;
		background: #d5d9dd;
	}

	.size {
		box-sizing: border-box;
		width: 16px;
		height: 11px;
		border: 1px solid #747775;
		border-radius: 2px;
		text-align: center;
	}

	.search {
		display: flex;
		align-items: center;
		gap: 4px;
		box-sizing: border-box;
		width: 50px;
		height: 13px;
		padding: 0 5px;
		border-radius: 7px;
		background: #fff;
	}

	.search input {
		width: 28px;
		font-family: "DejaVu Sans", sans-serif;
	}

	.formula {
		display: flex;
		align-items: center;
		justify-content: flex-end;
		gap: 12px;
		height: 14px;
		margin-top: 4px;
		padding-right: 6px;
		font-size: 6px;
	}

	.formula em {
		font: italic 8px "Liberation Serif", serif;
	}

	.formula span {
		margin-left: 18px;
	}

	/* sheet */
	.sheet {
		display: flex;
		flex: 1;
		border-top: 1px solid #cfd2d4;
	}

	.grid {
		flex: 1;
		background: #f8faf8;
	}

	table {
		table-layout: fixed;
		width: 743px;
		border-spacing: 0;
	}

	th {
		box-sizing: border-box;
		padding: 0;
		border-right: 1px solid #dcdedf;
		background: #fff;
		font: 400 6px/8px "Liberation Sans", sans-serif;
		color: #5f6368;
	}

	thead th {
		height: 11px;
	}

	.corner {
		background: #f8f9fa;
	}

	.rownum {
		border-right: 1px solid #c0c3c5;
		border-bottom: 1px solid #e2e4e5;
	}

	.rownum span {
		display: block;
		height: 8px;
	}

	th.current {
		background: #d3e3fd;
		color: #041e49;
		font-weight: 700;
	}

	td {
		box-sizing: border-box;
		position: relative;
		padding: 2px 0 0;
		border-right: 1px solid #202020;
		border-bottom: 1px solid #141414;
		background: #2b2b2b;
		color: #fff;
		font: 700 7px/8px Roboto, sans-serif;
		text-align: center;
		white-space: nowrap;
	}

	td.gap,
	td.head {
		border-color: #1b1b1b;
		background: #1b1b1b;
	}

	td.head {
		border-color: #101010;
	}

	td.title {
		font-family: "Noto Sans", sans-serif;
	}

	td.mid {
		font-family: "Noto Sans", sans-serif;
		font-size: 8px;
	}

	td.total {
		font-family: "Noto Sans", sans-serif;
		font-size: 12px;
	}

	td.selected {
		border: 1px solid #4d7ad4;
	}

	.value {
		display: flex;
		align-items: center;
		justify-content: center;
		gap: 3px;
		height: 8px;
	}

	.gold {
		width: 10px;
		height: 10px;
		fill: #ecc83c;
	}

	.handle {
		position: absolute;
		right: -3px;
		bottom: -3px;
		z-index: 1;
		width: 4px;
		height: 4px;
		border: 1px solid #b9cff5;
		border-radius: 50%;
		background: #2f66cc;
	}

	.seal {
		display: block;
		width: 48px;
		height: 48px;
		margin: 0 auto;
		fill: #fff;
	}

	.seal text {
		font: 700 7px "Liberation Sans", sans-serif;
		text-anchor: middle;
		stroke: #fff;
		stroke-width: 0.5;
	}

	.freeze td {
		height: 3px;
		padding: 0;
		border: 0;
		background: #bdbebd;
	}

	.add-rows {
		display: flex;
		align-items: center;
		gap: 4px;
		padding: 6px 0 0 27px;
		color: #6a6d70;
	}

	.add-rows input {
		box-sizing: border-box;
		width: 29px;
		height: 15px;
		border: 1px solid #a9adb0;
		border-radius: 2px;
		text-align: center;
		font-family: Inter, sans-serif;
	}

	.add-rows button {
		margin-left: 9px;
		color: #2a56c6;
	}

	.vscroll {
		display: flex;
		flex-direction: column;
		align-items: center;
		width: 5px;
		border-left: 1px solid #d7d9da;
		font-size: 4px;
		line-height: 8px;
		color: #777;
	}

	.vscroll span {
		width: 5px;
		height: 2px;
		margin: 104px 0 auto;
		background: #c9cbcc;
	}

	.vscroll i,
	.hscroll i {
		font-style: normal;
	}

	.hscroll {
		display: flex;
		align-items: center;
		justify-content: flex-end;
		gap: 5px;
		height: 5px;
		padding-right: 8px;
		border-top: 2px solid #e9ebea;
		font-size: 4px;
		color: #777;
	}

	.sheet-tabs {
		display: flex;
		align-items: center;
		justify-content: flex-end;
		height: 18px;
		padding-right: 22px;
		border-top: 1px solid #d9dcde;
		background: #f9fbfd;
		font: 500 7px Inter, sans-serif;
		color: #55585c;
	}

	.sheet-tabs button {
		gap: 5px;
		height: 18px;
		padding: 0 7px;
	}

	.sheet-tabs .selected {
		background: #dfe4ec;
		color: #2450b8;
		font-weight: 600;
	}

	.sheet-tabs .all {
		margin-left: 8px;
	}

	.sheet-tabs .add {
		padding: 0 4px;
	}

	.taskbar {
		display: grid;
		grid-template-columns: 1fr auto 1fr;
		align-items: center;
		height: 24px;
		background: #1f1c29;
		color: #eee;
	}

	.programs {
		display: flex;
		grid-column: 2;
	}

	.programs button {
		position: relative;
		width: 22px;
		height: 22px;
	}

	.programs .active {
		border-radius: 3px;
		background: #32303e;
	}

	.badge {
		position: absolute;
		top: 2px;
		right: 2px;
		width: 6px;
		height: 6px;
		border-radius: 50%;
		background: #e03840;
	}

	.running {
		position: absolute;
		bottom: 1px;
		left: 9px;
		width: 4px;
		height: 1px;
		background: #bbb;
	}

	.tray {
		display: flex;
		align-items: center;
		justify-content: flex-end;
		gap: 8px;
		padding-right: 9px;
	}

	.tray svg {
		width: 8px;
		height: 8px;
	}

	.tray .near {
		margin-right: -3px;
	}

	.lang {
		font-size: 6px;
	}

	.clock {
		display: flex;
		flex-direction: column;
		align-items: flex-end;
		font: 6px/8px Roboto, sans-serif;
	}

	/* stream chat over the desktop */
	.chat {
		position: absolute;
		bottom: 0;
		left: 2px;
		font: 500 12px/22px Roboto, "DejaVu Sans", sans-serif;
		color: #fff;
	}

	.chat p {
		display: flex;
		align-items: center;
		height: 22px;
		margin: 0;
	}

	.chat b {
		margin-left: 4px;
		font-weight: 700;
	}

	.chat-badge {
		width: 13px;
		height: 13px;
	}

	.colon {
		margin: 0 4px;
	}

	.chat bdi {
		font-size: 10px;
	}

	.pale b {
		-webkit-text-stroke: 1px #4d6f8c;
		paint-order: stroke fill;
	}

	.pale bdi,
	.pale .colon {
		-webkit-text-stroke: 1px #777;
		paint-order: stroke fill;
	}
</style>
